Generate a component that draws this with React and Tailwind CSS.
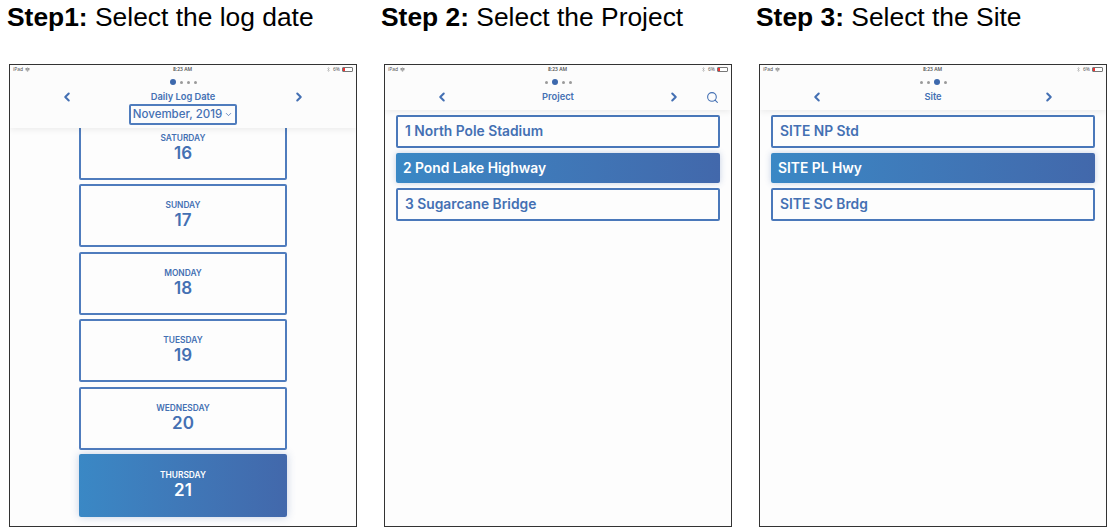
import React from "react";
import { ChevronLeft, ChevronRight, ChevronDown, Search, Wifi, Bluetooth } from "lucide-react";

const blue = "text-[#4470b3]";
const font = { fontFamily: "Inter, 'Open Sans', sans-serif" };

const days = [
  ["SATURDAY", "16"],
  ["SUNDAY", "17"],
  ["MONDAY", "18"],
  ["TUESDAY", "19"],
  ["WEDNESDAY", "20"],
  ["THURSDAY", "21", true],
];

const StatusBar = () => (
  <div className="relative flex h-[9px] items-center justify-between pl-[3px] pr-[3px] text-[5px] leading-none text-[#555]">
    <div className="flex items-center gap-[2px]">
      <span>iPad</span>
      <Wifi size={5} strokeWidth={3} />
    </div>
    <span className="absolute left-[163px] font-semibold">8:23 AM</span>
    <div className="flex items-center gap-[2px]">
      <Bluetooth size={5} strokeWidth={2} className="text-[#999]" />
      <span>6%</span>
      <div className="h-[5px] w-[11px] overflow-hidden rounded-[1px] border border-[#777] bg-white">
        <div className="h-full w-[2px] bg-[#e33]" />
      </div>
    </div>
  </div>
);

const Dots = ({ active }) => (
  <div className="flex h-[10px] items-center justify-center gap-[4px]">
    {[0, 1, 2, 3].map((i) =>
      i === active ? (
        <span key={i} className="h-[6px] w-[6px] rounded-full bg-[#3d69ad]" />
      ) : (
        <span key={i} className="h-[3px] w-[3px] rounded-full bg-[#9a9a9a]" />
      )
    )}
  </div>
);

const Header = ({ active, title, search, children, height }) => (
  <div
    className={`relative z-10 shrink-0 bg-[#fcfcfc] shadow-[0_2px_6px_rgba(0,0,0,0.07)] ${height}`}
  >
    <StatusBar />
    <div className="mt-[3px]">
      <Dots active={active} />
    </div>
    <div className={`relative mt-[1px] flex h-[18px] items-center ${blue}`}>
      <ChevronLeft size={14} strokeWidth={3.5} className="absolute left-[50px]" />
      <span className="mx-auto text-[9.3px] font-semibold" style={font}>
        {title}
      </span>
      <ChevronRight size={14} strokeWidth={3.5} className="absolute left-[282px]" />
      {search && <Search size={13} strokeWidth={2} className="absolute left-[321px]" />}
    </div>
    {children}
  </div>
);

const DayCard = ({ day, num, selected }) => (
  <div
    className={`flex h-[63px] w-[208px] shrink-0 flex-col items-center justify-center rounded-[2px] ${
      selected
        ? "bg-gradient-to-r from-[#3a88c5] to-[#4268ab] text-white shadow-[0_0_8px_rgba(66,104,171,0.3)]"
        : `border-2 border-[#4f7cbd] ${blue}`
    }`}
    style={font}
  >
    <span className="text-[8.4px] font-semibold leading-[11px]">{day}</span>
    <span className="mb-[1px] text-[17px] font-semibold leading-[19px]">{num}</span>
  </div>
);

const ListItem = ({ label, selected }) => (
  <div
    className={`flex items-center rounded-[2px] text-[13.8px] font-semibold ${
      selected
        ? "h-[30px] bg-gradient-to-r from-[#3a88c5] to-[#4268ab] pl-[7px] text-white shadow-[0_0_6px_rgba(66,104,171,0.3)]"
        : `h-[33px] border-2 border-[#4a78ba] pl-[7px] ${blue}`
    }`}
    style={font}
  >
    {label}
  </div>
);

const Phone = ({ children }) => (
  <div className="flex h-[463px] w-[348px] flex-col overflow-hidden border border-[#333] bg-[#fdfdfd]">
    {children}
  </div>
);

const Step = ({ bold, text, offset, children }) => (
  <div className="w-[348px] shrink-0">
    <h2
      className={`mb-[22px] h-[42px] whitespace-nowrap pt-[3px] text-[26.4px] leading-[28px] text-black ${offset}`}
      style={{ fontFamily: "'Liberation Sans', Arial, sans-serif" }}
    >
      <b>{bold}</b> {text}
    </h2>
    {children}
  </div>
);

const ListPhone = ({ active, title, search, items }) => (
  <Phone>
    <Header active={active} title={title} search={search} height="h-[45px]" />
    <div className="flex flex-col gap-[5px] px-[11px] pt-[5px]">
      {items.map((item) => (
        <ListItem key={item} label={item} selected={item === items[1]} />
      ))}
    </div>
  </Phone>
);

export default function App() {
  return (
    <div className="flex h-[530px] w-[1108px] gap-[27px] overflow-hidden bg-white pl-[9px]">
      <Step bold="Step1:" text="Select the log date" offset="-ml-[2px]">
        <Phone>
          <Header active={0} title="Daily Log Date" height="h-[63px]">
            <div className="-mt-[2px] flex justify-center">
              <div
                className={`flex h-[21px] w-[108px] items-center justify-center gap-[2px] rounded-[2px] border-2 border-[#4f7cbd] text-[11.5px] font-medium ${blue}`}
                style={font}
              >
                November, 2019
                <ChevronDown size={9} />
              </div>
            </div>
          </Header>
          <div className="flex min-h-0 flex-1 flex-col items-center justify-end gap-[4.5px] pb-[9px]">
            {days.map(([day, num, selected]) => (
              <DayCard key={day} day={day} num={num} selected={selected} />
            ))}
          </div>
        </Phone>
      </Step>
      <Step bold="Step 2:" text="Select the Project" offset="-ml-[3px]">
        <ListPhone
          active={1}
          title="Project"
          search
          items={["1 North Pole Stadium", "2 Pond Lake Highway", "3 Sugarcane Bridge"]}
        />
      </Step>
      <Step bold="Step 3:" text="Select the Site" offset="-ml-[3px]">
        <ListPhone
          active={2}
          title="Site"
          items={["SITE NP Std", "SITE PL Hwy", "SITE SC Brdg"]}
        />
      </Step>
    </div>
  );
}
